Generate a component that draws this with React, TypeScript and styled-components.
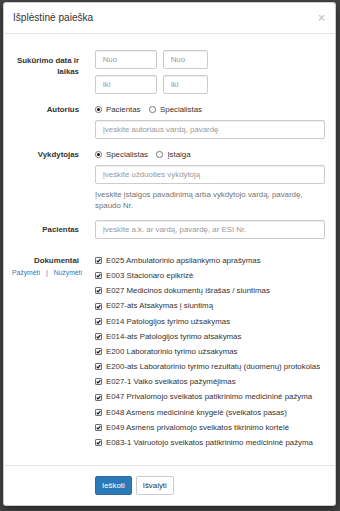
import styled, { createGlobalStyle } from "styled-components";

const GlobalStyle = createGlobalStyle`
    html, body {
        margin: 0;
        padding: 0;
        background: #454545;
    }
    * {
        box-sizing: border-box;
    }
`;

const Backdrop = styled.div`
    min-height: 511px;
    padding: 2px 4px 0 3px;
    background: #454545;
    font-family: "Liberation Sans", Arial, sans-serif;
    font-size: 7.86px;
    color: #333;
`;

const Modal = styled.div`
    width: 333px;
    background: #fff;
    border: 1px solid rgba(0, 0, 0, 0.2);
    border-radius: 3px;
    box-shadow: 0 3px 8px rgba(0, 0, 0, 0.5);
`;

const Header = styled.div`
    display: flex;
    justify-content: space-between;
    align-items: center;
    padding: 8px 9px;
    border-bottom: 1px solid #e5e5e5;
`;

const Title = styled.h4`
    margin: 0;
    font-size: 10.1px;
    line-height: 14.4px;
    font-weight: 500;
    color: #333;
`;

const Close = styled.span`
    font-size: 12px;
    line-height: 12px;
    font-weight: bold;
    color: #000;
    opacity: 0.2;
    margin-right: 1px;
`;

const Body = styled.div`
    padding: 16px 10px 17px 0;
`;

const Form = styled.div`
    display: flex;
    flex-direction: column;
    gap: 9.5px;
`;

const FormRow = styled.div`
    display: grid;
    grid-template-columns: 75px 1fr;
    column-gap: 16px;
`;

const Label = styled.div<{ $pad: number }>`
    display: flex;
    flex-direction: column;
    align-items: flex-end;
    text-align: right;
    font-weight: bold;
    line-height: 11px;
    padding-top: ${(p) => p.$pad}px;
`;

const Links = styled.div`
    display: flex;
    gap: 6px;
    margin-top: 1px;
    margin-right: -3px;
    font-size: 6.8px;
    font-weight: normal;
    color: #337ab7;
`;

const Field = styled.div`
    display: flex;
    flex-direction: column;
    gap: 5.5px;
`;

const DateGrid = styled.div`
    display: grid;
    grid-template-columns: 62px 45px;
    gap: 6px;
`;

const Input = styled.input`
    display: block;
    width: 100%;
    height: 19px;
    padding: 0 6.7px;
    font-family: inherit;
    font-size: 7.86px;
    color: #555;
    background: #fff;
    border: 1px solid #ccc;
    border-radius: 2px;
    box-shadow: inset 0 1px 1px rgba(0, 0, 0, 0.075);
    outline: none;

    &::placeholder {
        color: #999;
    }
`;

const RadioLine = styled.div`
    display: flex;
    align-items: center;
    height: 11px;
    gap: 8.5px;
`;

const Option = styled.label`
    display: flex;
    align-items: center;
    gap: 4.5px;
    line-height: 11px;
`;

const RadioMark = styled.span<{ $on?: boolean }>`
    position: relative;
    width: 6.5px;
    height: 6.5px;
    border: 1px solid #777;
    border-radius: 50%;
    background: #fff;

    &::after {
        content: "";
        display: ${(p) => (p.$on ? "block" : "none")};
        position: absolute;
        left: 0.75px;
        top: 0.75px;
        width: 3px;
        height: 3px;
        border-radius: 50%;
        background: #111;
    }
`;

const Help = styled.div`
    color: #737373;
    line-height: 11px;
    margin-top: -1px;
`;

const CheckList = styled.div`
    display: flex;
    flex-direction: column;
    margin-top: 2px;
`;

const CheckRow = styled.label`
    display: flex;
    align-items: center;
    gap: 4px;
    padding-top: 4px;
    line-height: 11.17px;
    white-space: nowrap;
`;

const CheckMark = styled.span`
    display: flex;
    align-items: center;
    justify-content: center;
    width: 7px;
    height: 7px;
    border: 1px solid #6f6f6f;
    border-radius: 1px;
    background: linear-gradient(#fdfdfd, #e6e6e6);
`;

const Footer = styled.div`
    display: grid;
    grid-template-columns: 75px 1fr;
    column-gap: 16px;
    padding: 10px 0;
    border-top: 1px solid #e5e5e5;
`;

const Buttons = styled.div`
    display: flex;
    gap: 4px;
`;

const Button = styled.button<{ $primary?: boolean }>`
    height: 19px;
    padding: 0 6px;
    font-family: inherit;
    font-size: 7.86px;
    border-radius: 2px;
    border: 1px solid ${(p) => (p.$primary ? "#2e6da4" : "#ccc")};
    background: ${(p) => (p.$primary ? "#2a7ab8" : "#fff")};
    color: ${(p) => (p.$primary ? "#fff" : "#333")};
`;

const documents = [
    "E025 Ambulatorinio apsilankymo aprašymas",
    "E003 Stacionaro epikrizė",
    "E027 Medicinos dokumentų išrašas / siuntimas",
    "E027-ats Atsakymas į siuntimą",
    "E014 Patologijos tyrimo užsakymas",
    "E014-ats Patologijos tyrimo atsakymas",
    "E200 Laboratorinio tyrimo užsakymas",
    "E200-ats Laboratorinio tyrimo rezultatų (duomenų) protokolas",
    "E027-1 Vaiko sveikatos pažymėjimas",
    "E047 Privalomojo sveikatos patikrinimo medicininė pažyma",
    "E048 Asmens medicininė knygelė (sveikatos pasas)",
    "E049 Asmens privalomojo sveikatos tikrinimo kortelė",
    "E083-1 Vairuotojo sveikatos patikrinimo medicininė pažyma",
];

function Check() {
    return (
        <CheckMark>
            <svg width="5" height="5" viewBox="0 0 10 10">
                <path d="M1.5 5.2 L4 7.8 L8.8 2.2" fill="none" stroke="#111" strokeWidth="2.2" />
            </svg>
        </CheckMark>
    );
}

export default function App() {
    return (
        <Backdrop>
            <GlobalStyle />
            <Modal>
                <Header>
                    <Title>Išplėstinė paieška</Title>
                    <Close>×</Close>
                </Header>
                <Body>
                    <Form>
                        <FormRow>
                            <Label $pad={5}>Sukūrimo data ir laikas</Label>
                            <DateGrid>
                                <Input placeholder="Nuo" />
                                <Input placeholder="Nuo" />
                                <Input placeholder="Iki" />
                                <Input placeholder="Iki" />
                            </DateGrid>
                        </FormRow>
                        <FormRow>
                            <Label $pad={0}>Autorius</Label>
                            <Field>
                                <RadioLine>
                                    <Option><RadioMark $on />Pacientas</Option>
                                    <Option><RadioMark />Specialistas</Option>
                                </RadioLine>
                                <Input placeholder="Įveskite autoriaus vardą, pavardę" />
                            </Field>
                        </FormRow>
                        <FormRow>
                            <Label $pad={0}>Vykdytojas</Label>
                            <Field>
                                <RadioLine>
                                    <Option><RadioMark $on />Specialistas</Option>
                                    <Option><RadioMark />Įstaiga</Option>
                                </RadioLine>
                                <Input placeholder="Įveskite užduoties vykdytoją" />
                                <Help>Įveskite įstaigos pavadinimą arba vykdytojo vardą, pavardę, spaudo Nr.</Help>
                            </Field>
                        </FormRow>
                        <FormRow>
                            <Label $pad={4}>Pacientas</Label>
                            <Input placeholder="Įveskite a.k. ar vardą, pavardę, ar ESI Nr." />
                        </FormRow>
                        <FormRow>
                            <Label $pad={6}>
                                Dokumentai
                                <Links>
                                    <span>Pažymėti</span>
                                    <span>|</span>
                                    <span>Nužymėti</span>
                                </Links>
                            </Label>
                            <CheckList>
                                {documents.map((doc) => (
                                    <CheckRow key={doc}>
                                        <Check />
                                        {doc}
                                    </CheckRow>
                                ))}
                            </CheckList>
                        </FormRow>
                    </Form>
                </Body>
                <Footer>
                    <span />
                    <Buttons>
                        <Button $primary>Ieškoti</Button>
                        <Button>Išvalyti</Button>
                    </Buttons>
                </Footer>
            </Modal>
        </Backdrop>
    );
}
